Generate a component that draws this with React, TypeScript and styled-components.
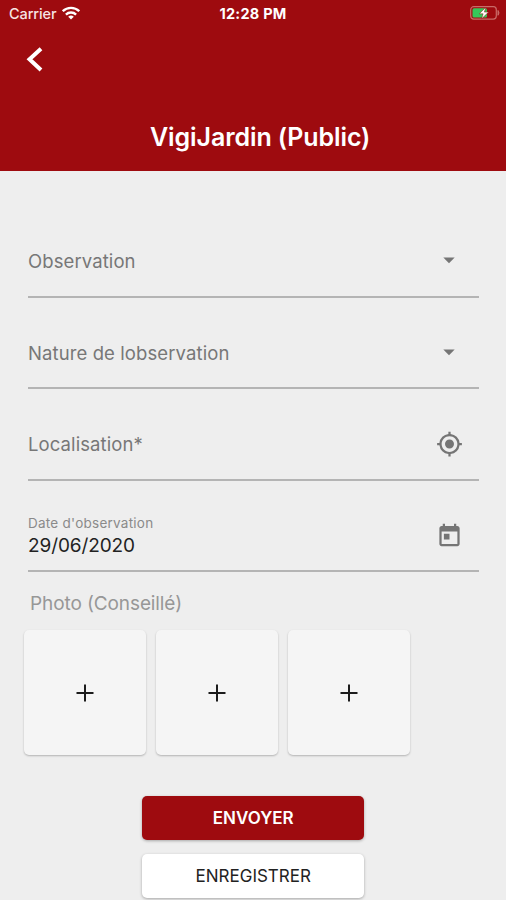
import React from 'react';
import styled, { createGlobalStyle } from 'styled-components';

const GlobalStyle = createGlobalStyle`
  * { box-sizing: border-box; }
  body { margin: 0; background: #eeeeee; overflow: hidden; }
  button { font: inherit; border: 0; padding: 0; margin: 0; background: none; }
`;

const Screen = styled.div`
  height: 900px;
  overflow: hidden;
  background: #eeeeee;
  font-family: Inter, 'Liberation Sans', sans-serif;
  display: flex;
  flex-direction: column;
`;

const Header = styled.header`
  height: 171px;
  flex: none;
  background: #9e0b0f;
  color: #fff;
`;

const StatusBar = styled.div`
  height: 27px;
  padding: 0 5px 0 9px;
  display: grid;
  grid-template-columns: 1fr auto 1fr;
  align-items: center;
`;

const Carrier = styled.div`
  display: flex;
  align-items: center;
  gap: 5px;
  font-size: 14.5px;
  font-weight: 500;
  letter-spacing: -0.1px;
  color: #f7e4e4;
  svg { margin-top: -2px; }
`;

const Clock = styled.div`
  font-weight: 700;
  font-size: 14.5px;
  letter-spacing: 0.25px;
  margin-right: 4px;
`;

const Battery = styled.svg`
  justify-self: end;
  display: block;
  margin-top: -1px;
`;

const BackButton = styled.button`
  && {
    display: block;
    margin: 18px 0 0 26px;
    width: 18px;
    height: 28px;
  }
  svg { display: block; }
`;

const Title = styled.h1`
  margin: 47px 0 0 150px;
  font-size: 25px;
  line-height: 34px;
  font-weight: 600;
  letter-spacing: -0.1px;
  white-space: nowrap;
`;

const Form = styled.main`
  padding: 35px 27.5px 0 28px;
`;

const Field = styled.div`
  height: 91.6px;
  padding: 20px 16px 0 0;
  border-bottom: 2px solid #b4b4b4;
  display: flex;
  justify-content: space-between;
  align-items: center;
  svg { display: block; }
`;

const FieldText = styled.div`
  display: flex;
  flex-direction: column;
  white-space: nowrap;
  padding-top: 1px;
`;

const Label = styled.span<{ $small?: boolean }>`
  padding-top: ${(p) => (p.$small ? 0 : 1)}px;
  font-size: ${(p) => (p.$small ? 13.5 : 18.5)}px;
  line-height: ${(p) => (p.$small ? 18 : 28)}px;
  letter-spacing: ${(p) => (p.$small ? 0.25 : 0.1)}px;
  color: ${(p) => (p.$small ? '#8a8a8a' : '#777777')};
`;

const Value = styled.span`
  font-size: 19px;
  line-height: 27px;
  letter-spacing: -0.1px;
  color: #222;
`;

const IconSlot = styled.div`
  width: 27px;
  display: flex;
  justify-content: center;
`;

const PhotoLabel = styled.div`
  padding-left: 2px;
  margin-top: 18px;
  font-size: 19px;
  line-height: 28px;
  letter-spacing: -0.1px;
  color: #979797;
`;

const Photos = styled.div`
  display: flex;
  gap: 10px;
  margin: 12px 0 0 -4px;
`;

const PhotoTile = styled.button`
  && {
    width: 122px;
    height: 125px;
    background: #f5f5f5;
    border-radius: 5px;
    box-shadow: 0 1px 2px rgba(0, 0, 0, 0.25);
    display: flex;
    align-items: center;
    justify-content: center;
  }
`;

const Actions = styled.div`
  display: flex;
  flex-direction: column;
  align-items: center;
  gap: 14px;
  margin-top: 41px;
`;

const ActionButton = styled.button<{ $primary?: boolean }>`
  && {
    width: 222px;
    height: 44px;
    border-radius: 5px;
    background: ${(p) => (p.$primary ? '#9e0b0f' : '#fff')};
    color: ${(p) => (p.$primary ? '#fff' : '#222')};
    font-size: 17px;
    font-weight: ${(p) => (p.$primary ? 600 : 400)};
    box-shadow: 0 1px 3px rgba(0, 0, 0, 0.3);
  }
`;

const Wifi = () => (
  <svg width="18" height="14" viewBox="0 0 18 14">
    <g fill="none" stroke="#fff" strokeWidth="2.3">
      <path d="M0.8 5.2a11.7 11.7 0 0 1 16.4 0" />
      <path d="M3.9 8.6a7.2 7.2 0 0 1 10.2 0" />
    </g>
    <path d="M9 13.6 6.2 10.8a4 4 0 0 1 5.6 0z" fill="#fff" />
  </svg>
);

const Caret = () => (
  <svg width="12" height="7" viewBox="0 0 12 7">
    <path d="M0.3 0.5h11.4L6 6.3z" fill="#757575" />
  </svg>
);

const Target = () => (
  <svg width="28" height="28" viewBox="0 0 24 24" fill="#757575">
    <path d="M12 8c-2.210 0-4 1.790-4 4s1.790 4 4 4 4-1.790 4-4-1.790-4-4-4zm8.940 3A8.994 8.994 0 0 0 13 3.060V1h-2v2.060A8.994 8.994 0 0 0 3.060 11H1v2h2.060A8.994 8.994 0 0 0 11 20.940V23h2v-2.060A8.994 8.994 0 0 0 20.940 13H23v-2h-2.060zM12 19c-3.870 0-7-3.130-7-7s3.130-7 7-7 7 3.130 7 7-3.130 7-7 7z" />
  </svg>
);

const Calendar = () => (
  <svg width="28" height="28" viewBox="0 0 24 24" fill="#757575">
    <path d="M19 3h-1V1h-2v2H8V1H6v2H5c-1.110 0-1.990.9-1.990 2L3 19c0 1.100.890 2 2 2h14c1.100 0 2-.9 2-2V5c0-1.100-.9-2-2-2zm0 16H5V8h14v11zM7 10h5v5H7z" />
  </svg>
);

const Plus = () => (
  <svg width="18" height="18" viewBox="0 0 18 18">
    <path d="M9 0.5v17M0.5 9h17" stroke="#1c1c1c" strokeWidth="2" />
  </svg>
);

export default function App() {
  return (
    <Screen>
      <GlobalStyle />
      <Header>
        <StatusBar>
          <Carrier>
            Carrier
            <Wifi />
          </Carrier>
          <Clock>12:28 PM</Clock>
          <Battery width="31" height="14" viewBox="0 0 31 14">
            <rect x="0.7" y="0.7" width="25.6" height="12.4" rx="3" fill="none" stroke="#c96b68" strokeWidth="1.2" />
            <path d="M28 4.500q2 2.400 0 4.800z" fill="#c96b68" stroke="#c96b68" />
            <rect x="2.500" y="2.300" width="14.500" height="9.200" rx="1.500" fill="#35c759" />
            <path d="M15.800 1.200 9.300 7.800h3.800l-1.500 5 7-6.700h-4.200z" fill="#fff" stroke="#8f1510" strokeWidth="0.5" />
          </Battery>
        </StatusBar>
        <BackButton aria-label="Retour">
          <svg width="18" height="28" viewBox="0 0 18 28">
            <path d="M15 3.800 3.500 14.200 15 25" fill="none" stroke="#fff" strokeWidth="4" />
          </svg>
        </BackButton>
        <Title>VigiJardin (Public)</Title>
      </Header>
      <Form>
        <Field>
          <Label>Observation</Label>
          <IconSlot><Caret /></IconSlot>
        </Field>
        <Field>
          <Label>Nature de lobservation</Label>
          <IconSlot><Caret /></IconSlot>
        </Field>
        <Field>
          <Label>Localisation*</Label>
          <IconSlot><Target /></IconSlot>
        </Field>
        <Field>
          <FieldText>
            <Label $small>Date d'observation</Label>
            <Value>29/06/2020</Value>
          </FieldText>
          <IconSlot><Calendar /></IconSlot>
        </Field>
        <PhotoLabel>Photo (Conseillé)</PhotoLabel>
        <Photos>
          <PhotoTile aria-label="Photo 1"><Plus /></PhotoTile>
          <PhotoTile aria-label="Photo 2"><Plus /></PhotoTile>
          <PhotoTile aria-label="Photo 3"><Plus /></PhotoTile>
        </Photos>
        <Actions>
          <ActionButton $primary>ENVOYER</ActionButton>
          <ActionButton>ENREGISTRER</ActionButton>
        </Actions>
      </Form>
    </Screen>
  );
}
